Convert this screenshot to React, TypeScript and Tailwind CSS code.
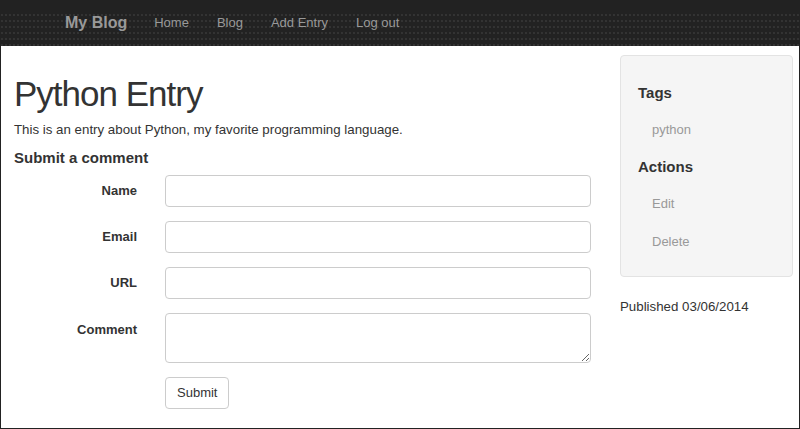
export default function App() {
  const fields = ['Name', 'Email', 'URL'];

  return (
    <div className="w-[800px] h-[429px] overflow-hidden bg-white font-['Liberation_Sans',Arial,sans-serif] text-[#333]">
      <nav className="h-[46px] bg-[#222] bg-[linear-gradient(#222_14px,transparent_14px),radial-gradient(#333_0.6px,transparent_0.8px)] bg-[size:100%_100%,4px_6px] flex items-center pl-[65px]">
        <span className="text-[16px] font-bold text-[#999] mr-[27px]">My Blog</span>
        <div className="flex gap-[28px] text-[13px] text-[#999]">
          <span>Home</span>
          <span>Blog</span>
          <span>Add Entry</span>
          <span>Log out</span>
        </div>
      </nav>

      <div className="h-[383px] border-x border-b border-[#222] flex">
        <main className="w-[591px] pl-[13px]">
          <h1 className="mt-[28px] text-[35px] leading-[40px] tracking-[-1px] text-[#333]">Python Entry</h1>
          <p className="mt-[7px] text-[13.3px] leading-[18px]">
            This is an entry about Python, my favorite programming language.
          </p>
          <h3 className="mt-[9px] text-[15px] leading-[20px] font-bold">Submit a comment</h3>

          <form className="mt-[7px] flex flex-col gap-[14px]">
            {fields.map((f) => (
              <div key={f} className="flex items-center">
                <label className="w-[123px] text-right text-[13px] font-bold">{f}</label>
                <input className="ml-[28px] w-[426px] h-[32px] border border-[#ccc] rounded-[4px] bg-white" />
              </div>
            ))}
            <div className="flex items-start">
              <label className="w-[123px] text-right text-[13px] font-bold pt-[7px]">Comment</label>
              <textarea className="ml-[28px] w-[426px] h-[50px] border border-[#ccc] rounded-[4px] bg-white" />
            </div>
            <div className="pl-[151px]">
              <button
                type="button"
                className="h-[32px] px-[11px] border border-[#ccc] rounded-[4px] bg-white text-[13px] text-[#333]"
              >
                Submit
              </button>
            </div>
          </form>
        </main>

        <aside className="ml-[28px] w-[173px]">
          <div className="mt-[9px] h-[222px] bg-[#f5f5f5] border border-[#e3e3e3] rounded-[4px] pl-[17px] pt-[27px]">
            <h4 className="text-[15px] leading-[20px] font-bold">Tags</h4>
            <div className="mt-[17px] pl-[14px] text-[13px] text-[#999]">python</div>
            <h4 className="mt-[17px] text-[15px] leading-[20px] font-bold">Actions</h4>
            <div className="mt-[17px] pl-[14px] text-[13px] text-[#999]">Edit</div>
            <div className="mt-[19px] pl-[14px] text-[13px] text-[#999]">Delete</div>
          </div>
          <p className="mt-[20px] text-[13.3px]">Published 03/06/2014</p>
        </aside>
      </div>
    </div>
  );
}
